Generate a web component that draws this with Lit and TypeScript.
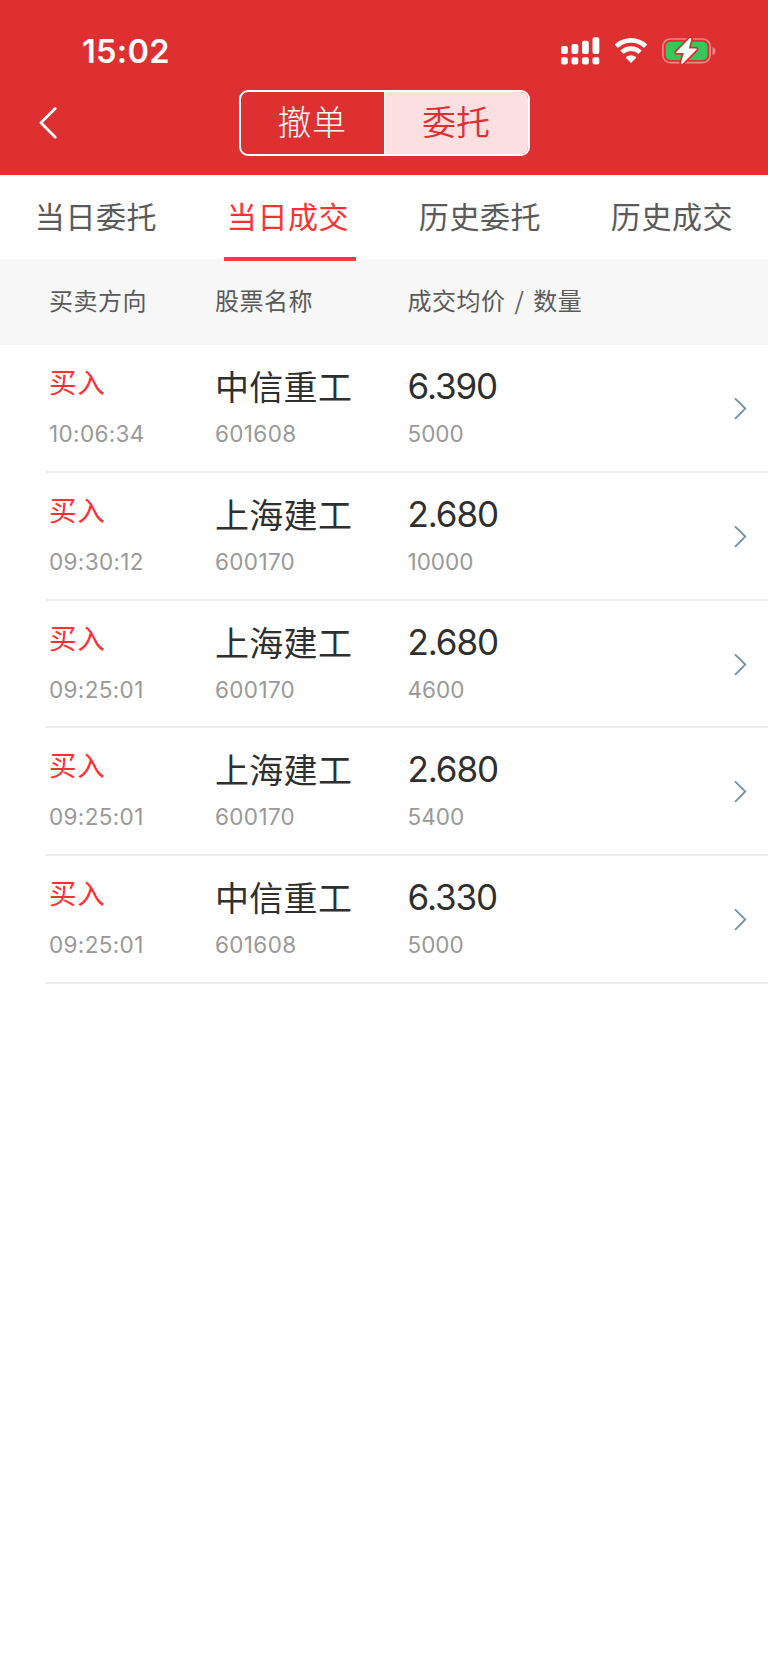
import { LitElement, html, css, svg } from "lit";
import { customElement, state } from "lit/decorators.js";

interface Deal {
  time: string;
  name: string;
  code: string;
  price: string;
  qty: string;
}

const DEALS: Deal[] = [
  { time: "10:06:34", name: "中信重工", code: "601608", price: "6.390", qty: "5000" },
  { time: "09:30:12", name: "上海建工", code: "600170", price: "2.680", qty: "10000" },
  { time: "09:25:01", name: "上海建工", code: "600170", price: "2.680", qty: "4600" },
  { time: "09:25:01", name: "上海建工", code: "600170", price: "2.680", qty: "5400" },
  { time: "09:25:01", name: "中信重工", code: "601608", price: "6.330", qty: "5000" },
];

const BARS = [
  { x: 0, y: 9, h: 8 },
  { x: 10.5, y: 7, h: 10 },
  { x: 21, y: 3.8, h: 13.2 },
  { x: 31.5, y: 0.3, h: 16.7 },
];

@customElement("status-bar")
class StatusBar extends LitElement {
  static styles = css`
    :host {
      display: flex;
      justify-content: space-between;
      height: 84px;
      padding: 0 52px 0 82px;
      box-sizing: border-box;
      color: #fff;
    }
    .time {
      font: 600 32.5px/40px Inter, sans-serif;
      margin-top: 32px;
      letter-spacing: 0.3px;
    }
    .icons {
      display: flex;
      align-items: flex-start;
      padding-top: 37px;
    }
    .signal { margin-right: 14px; }
    .wifi { margin-right: 14px; }
    svg { display: block; }
  `;
  render() {
    return html`
      <span class="time">15:02</span>
      <div class="icons">
        <svg class="signal" width="39" height="29" viewBox="0 0 39 29" fill="#fff">
          ${BARS.map(
            (b) => svg`<rect x=${b.x} y=${b.y} width="6.8" height=${b.h} rx="2"></rect>
              <rect x=${b.x} y="20.3" width="6.8" height="7.3" rx="2"></rect>`
          )}
        </svg>
        <svg class="wifi" width="34" height="29" viewBox="0 0 34 29">
          <g fill="none" stroke="#fff" stroke-width="4.7">
            <path d="M2.3 9.2A21.2 21.2 0 0 1 31.7 9.2"></path>
            <path d="M7.9 15.3A13.1 13.1 0 0 1 26.1 15.3"></path>
          </g>
          <path d="M17 26L12 20.9Q11.5 20.3 12.2 19.8Q17 16.7 21.8 19.8Q22.5 20.3 22 20.9Z" fill="#fff"></path>
        </svg>
        <svg width="54" height="29" viewBox="0 0 54 29">
          <rect x="0.9" y="2" width="47.2" height="23.7" rx="7.5" fill="none" stroke="#ee8788" stroke-width="1.7"></rect>
          <path d="M50.5 10v8Q53.4 17 53.4 14T50.5 10Z" fill="#ee8788"></path>
          <rect x="3.7" y="4.8" width="41.8" height="18.2" rx="4.8" fill="#34c759"></rect>
          <path d="M27.6 1.2L14.2 14.9Q13.9 16 14.8 16H21.8L19 26Q19.4 27.4 20.8 26.5L34.6 12.6Q34.9 11.6 33.9 11.5H26.8L29.3 1.9Q29 .4 27.6 1.2Z"
            fill="#fff" stroke="#df3031" stroke-width="3.6" stroke-linejoin="round" paint-order="stroke"></path>
        </svg>
      </div>
    `;
  }
}

@customElement("deal-row")
class DealRow extends LitElement {
  static properties = { deal: { attribute: false } };
  declare deal: Deal;
  static styles = css`
    :host {
      display: grid;
      grid-template-columns: 170px 192.5px 1fr auto;
      height: 127.8px;
      box-sizing: border-box;
      margin-left: 45px;
      border-bottom: 2px solid #eeeeee;
      font-family: Inter, sans-serif;
    }
    .cell { display: flex; flex-direction: column; }
    .cell.first { padding-left: 4px; }
    .top {
      height: 38px;
      margin-top: 21px;
      line-height: 38px;
      white-space: nowrap;
      color: #2f2f2f;
    }
    .side {
      font: 400 27.5px/31px "Noto Sans CJK SC", sans-serif;
      color: #ff3034;
      letter-spacing: 0.7px;
    }
    .name {
      font: 400 34px/39px "Noto Sans CJK SC", sans-serif;
      letter-spacing: 0.3px;
    }
    .price { font-size: 35px; line-height: 41px; letter-spacing: -1.1px; }
    .sub {
      margin-top: 16px;
      font-size: 22.5px;
      line-height: 28px;
      letter-spacing: 0.35px;
      color: #999;
    }
    .qty { letter-spacing: 0; }
    .more { margin: 52px 21.5px 0 0; }
  `;
  render() {
    const d = this.deal;
    return html`
      <div class="cell first"><span class="top side">买入</span><span class="sub">${d.time}</span></div>
      <div class="cell"><span class="top name">${d.name}</span><span class="sub">${d.code}</span></div>
      <div class="cell"><span class="top price">${d.price}</span><span class="sub qty">${d.qty}</span></div>
      <svg class="more" width="13" height="24" viewBox="0 0 13 24" fill="none" stroke="#7891a5" stroke-width="1.8">
        <path d="M1 1.3L11.3 11.5L1 21.9"></path>
      </svg>
    `;
  }
}

@customElement("app-root")
class AppRoot extends LitElement {
  @state() tab = 1;

  static styles = css`
    :host {
      display: block;
      min-height: 1663px;
      background: #fff;
      font-family: "Noto Sans CJK SC", sans-serif;
    }
    .header { height: 174.5px; background: #df3031; }
    .nav {
      display: grid;
      grid-template-columns: 238.5px 291px 1fr;
      padding-top: 6px;
    }
    .back { margin: 16px 0 0 38px; }
    .switch {
      display: grid;
      grid-template-columns: 144px 1fr;
      height: 66px;
      box-sizing: border-box;
      border: 2px solid #fff;
      border-radius: 9px;
      overflow: hidden;
      font-size: 34px;
      line-height: 58px;
      text-align: center;
    }
    .cancel { color: #fff; font-weight: 300; border-right: 1px solid #fff; letter-spacing: 0.4px; }
    .entrust { color: #df3031; background: #fbdfe1; font-weight: 350; }
    .tabs {
      display: grid;
      grid-template-columns: repeat(4, 1fr);
      height: 84.5px;
      font-size: 30px;
      line-height: 81px;
      color: #5a5a5a;
      letter-spacing: 0.6px;
    }
    .tab { display: flex; flex-direction: column; align-items: center; }
    .label { height: 82.5px; }
    .label.on { color: #ff3034; }
    .line { width: 131.5px; height: 4px; flex: none; margin-left: 4px; background: #fb3740; z-index: 1; }
    .columns {
      display: grid;
      grid-template-columns: 166px 192.5px 1fr;
      height: 86px;
      padding-left: 49px;
      background: #f7f7f7;
      font-size: 24px;
      line-height: 82px;
      color: #5a5a5a;
      letter-spacing: 0.5px;
      word-spacing: 3px;
      white-space: pre;
    }
  `;

  render() {
    const tabs = ["当日委托", "当日成交", "历史委托", "历史成交"];
    return html`
      <div class="header">
        <status-bar></status-bar>
        <div class="nav">
          <svg class="back" width="20" height="34" viewBox="0 0 20 34" fill="none" stroke="#fff" stroke-width="2.7" stroke-linecap="round" stroke-linejoin="round">
            <path d="M17.3 2.5L2.9 16.8L17.3 31.2"></path>
          </svg>
          <div class="switch"><span class="cancel">撤单</span><span class="entrust">委托</span></div>
        </div>
      </div>
      <div class="tabs">
        ${tabs.map(
          (t, i) => html`<div class="tab" @click=${() => (this.tab = i)}>
            <span class="label ${i === this.tab ? "on" : ""}">${t}</span>
            ${i === this.tab ? html`<span class="line"></span>` : ""}
          </div>`
        )}
      </div>
      <div class="columns"><span>买卖方向</span><span>股票名称</span><span>成交均价 / 数量</span></div>
      ${DEALS.map((d) => html`<deal-row .deal=${d}></deal-row>`)}
    `;
  }
}
